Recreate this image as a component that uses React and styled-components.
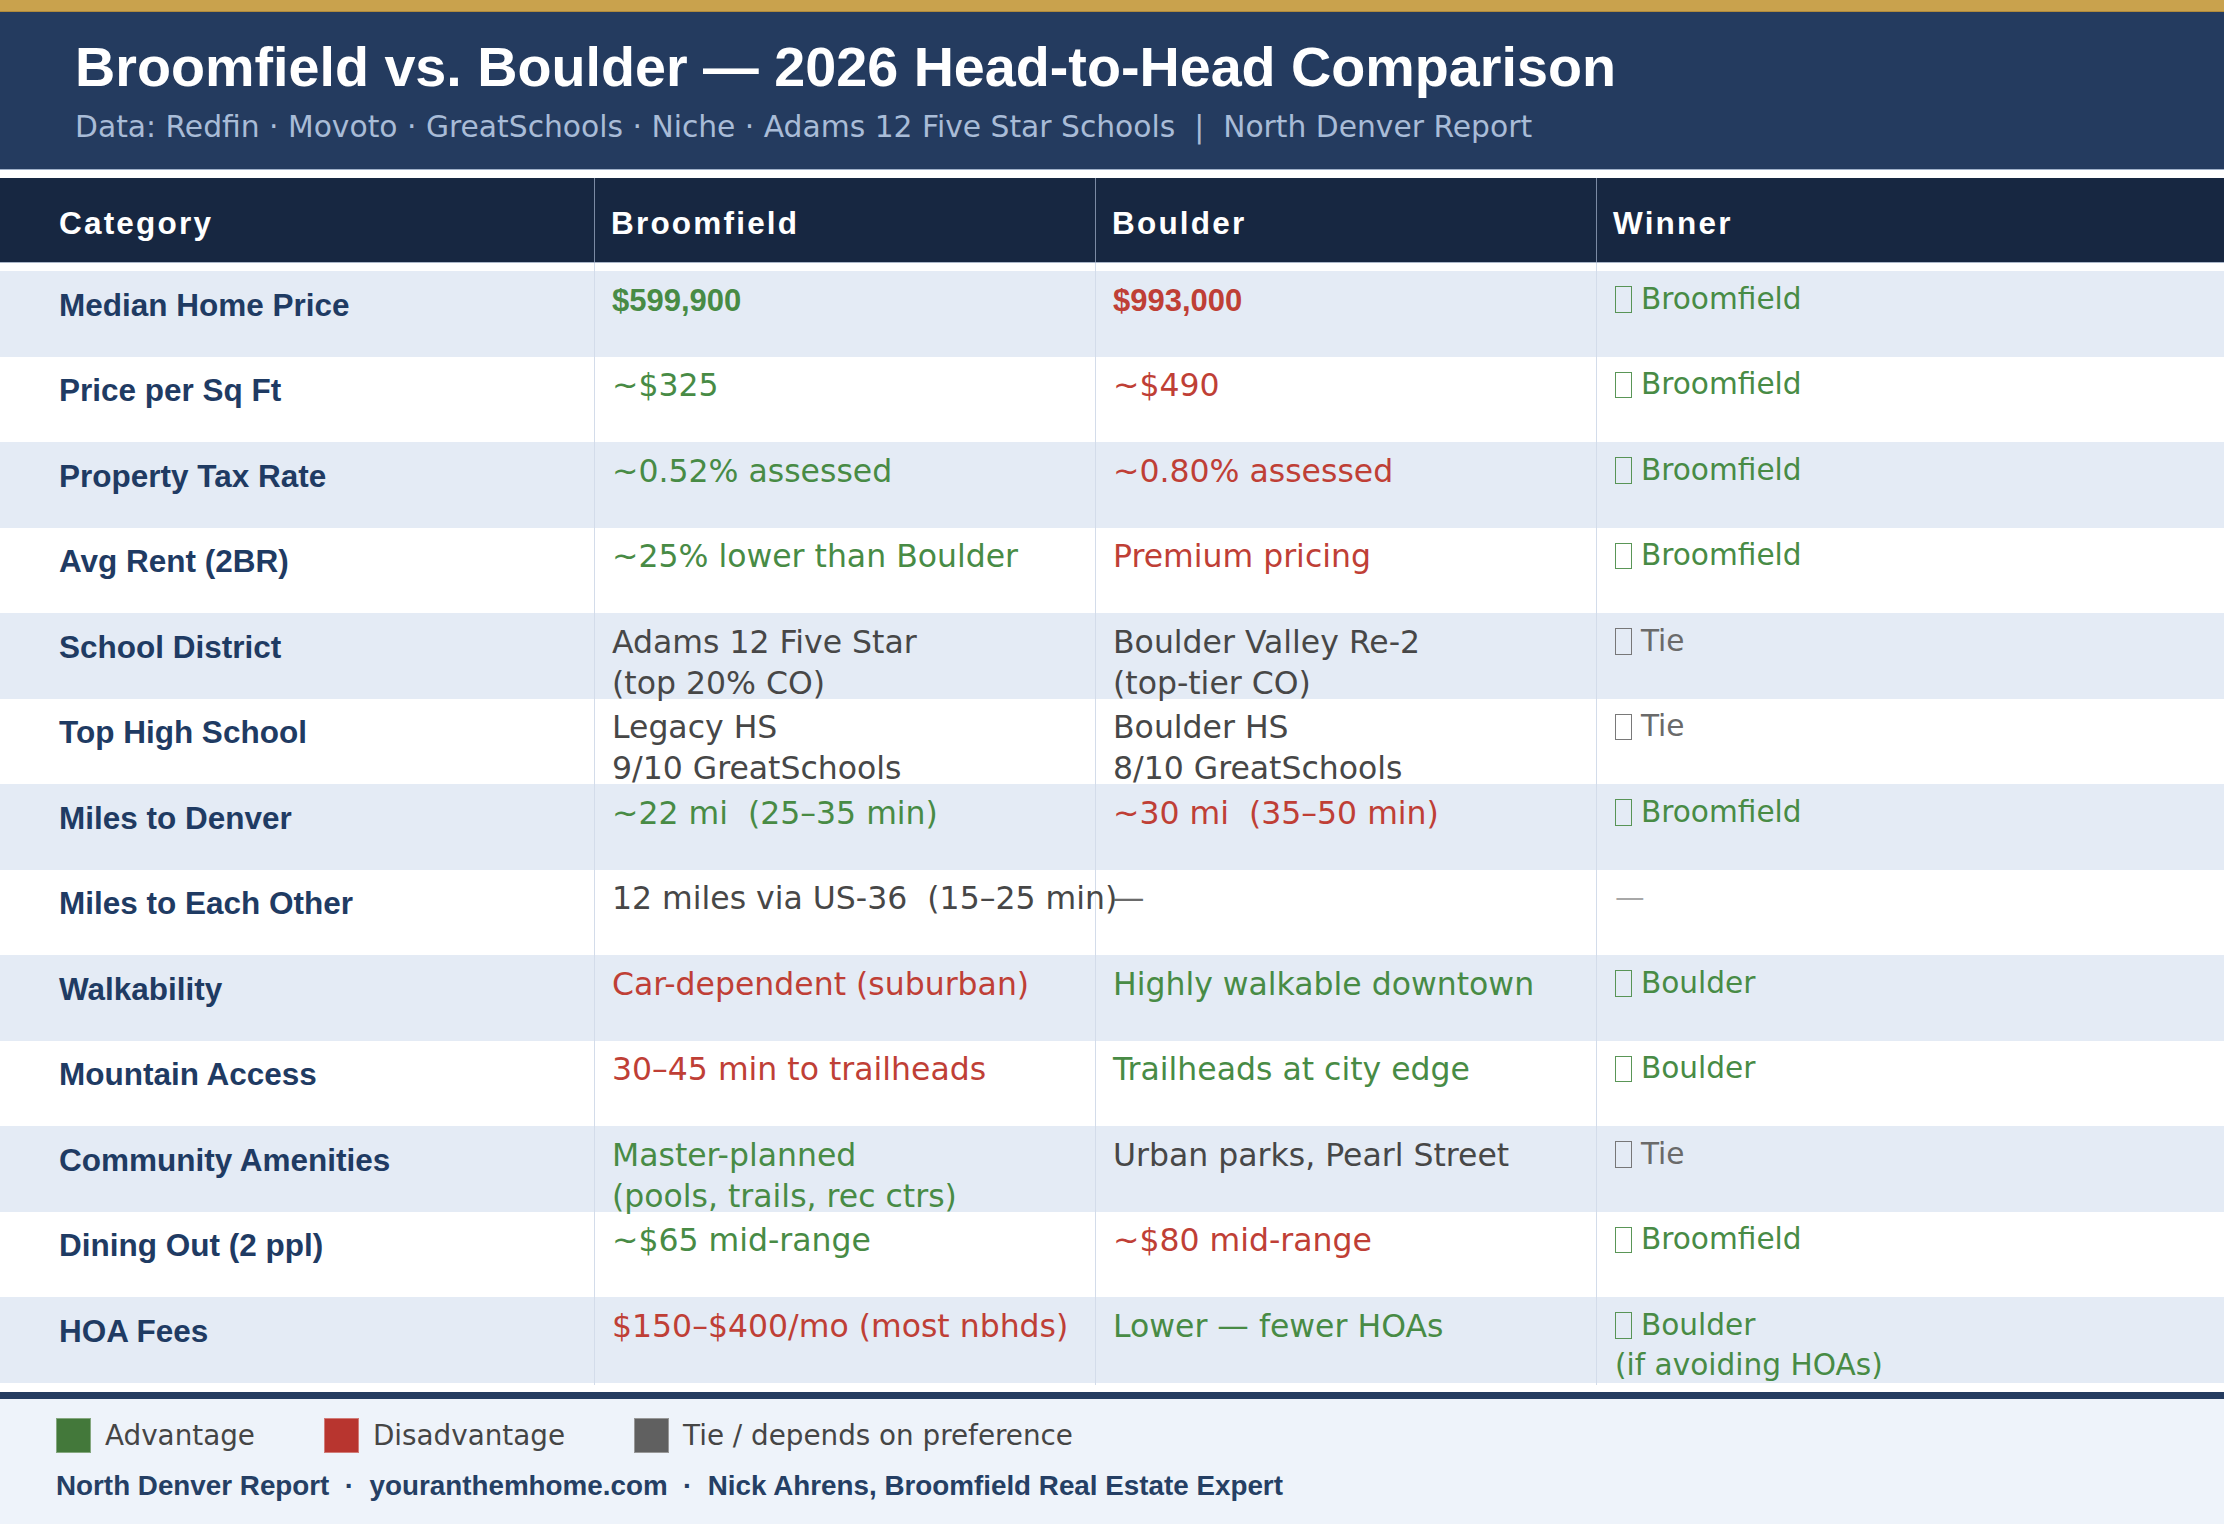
import React from "react";
import styled, { createGlobalStyle } from "styled-components";

const GlobalStyle = createGlobalStyle`
  html, body { margin: 0; padding: 0; background: #ffffff; }
  * { box-sizing: border-box; }
`;

const SANS = `"Liberation Sans", Arial, sans-serif`;
const BODY = `"DejaVu Sans", Verdana, sans-serif`;
const COLS = "594px 501px 501px 1fr";

const TONES = {
  good: "#488b45",
  bad: "#bf3f36",
  neutral: "#474747",
  tie: "#6a6a6a",
  none: "#a8a8a8",
};

const Page = styled.div`
  width: 2224px;
  height: 1524px;
  display: flex;
  flex-direction: column;
  background: #ffffff;
  overflow: hidden;
`;

const TopStripe = styled.div`
  height: 12px;
  background: #c9a24d;
  border-bottom: 1px solid #b08a3c;
`;

const Header = styled.header`
  height: 158px;
  background: #243b5f;
  padding: 24px 0 0 75px;
  border-bottom: 1px solid #9fb0c8;
`;

const Title = styled.h1`
  margin: 0;
  font: 700 55.7px/63px ${SANS};
  color: #ffffff;
`;

const Subtitle = styled.div`
  margin-top: 9.5px;
  font: 400 29.75px/36px ${BODY};
  color: #a9bcd7;
  white-space: pre;
`;

const Spacer = styled.div`
  height: 8px;
  background: #ffffff;
`;

const HeadRow = styled.div`
  display: grid;
  grid-template-columns: ${COLS};
  height: 85px;
  background: #172741;
  border-bottom: 1px solid #aab6c8;
`;

const HeadCell = styled.div`
  display: flex;
  align-items: center;
  padding: 6px 0 0 ${(p) => (p.$first ? "59px" : "16px")};
  border-left: ${(p) => (p.$first ? "none" : "1px solid #7b8aa3")};
  font: 700 31.5px/41px ${SANS};
  letter-spacing: 2.2px;
  color: #ffffff;
`;

const Body = styled.div`
  padding-top: 8px;
  background:
    linear-gradient(to right, transparent 594px, #d3dcea 594px, #d3dcea 595px, transparent 595px),
    linear-gradient(to right, transparent 1095px, #d3dcea 1095px, #d3dcea 1096px, transparent 1096px),
    linear-gradient(to right, transparent 1596px, #d3dcea 1596px, #d3dcea 1597px, transparent 1597px),
    #ffffff;
`;

const Row = styled.div`
  display: grid;
  grid-template-columns: ${COLS};
  height: 85.5px;
  background: ${(p) => (p.$alt ? "#e4ebf5" : "#ffffff")};
`;

const CatCell = styled.div`
  padding: 13.5px 0 0 59px;
  font: 700 31.5px/41px ${SANS};
  color: #1f3b63;
  white-space: nowrap;
`;

const ValueCell = styled.div`
  border-left: 1px solid #d3dcea;
  padding: 8.5px 0 0 17px;
  font-family: ${(p) => (p.$bold ? SANS : BODY)};
  font-weight: ${(p) => (p.$bold ? 700 : 400)};
  font-size: ${(p) => (p.$bold ? "31px" : "31.5px")};
  line-height: 41px;
  color: ${(p) => TONES[p.$tone]};
  white-space: pre;
  overflow: visible;
  position: relative;
  z-index: ${(p) => (p.$over ? 1 : 0)};
`;

const WinnerCell = styled.div`
  border-left: 1px solid #d3dcea;
  padding: 7.5px 0 0 18px;
  font: 400 29.6px/40px ${BODY};
  color: ${(p) => TONES[p.$tone]};
  white-space: pre;
`;

/* missing-glyph box shown before the winner name */
const Tofu = styled.span`
  display: inline-block;
  width: 16.5px;
  height: 26.5px;
  border: 1.6px solid currentColor;
  vertical-align: -4px;
  opacity: 0.9;
`;

const Footer = styled.footer`
  margin-top: 9.5px;
  flex: 1;
  background: #eef3fa;
  border-top: 7px solid #243b5f;
  padding: 19px 0 0 56px;
  display: flex;
  flex-direction: column;
  gap: 16px;
`;

const Legend = styled.div`
  display: flex;
  gap: 69px;
`;

const LegendItem = styled.div`
  display: flex;
  align-items: center;
  gap: 14px;
  font: 400 27.8px/35px ${BODY};
  color: #454545;
`;

const Swatch = styled.span`
  width: 35px;
  height: 35px;
  background: ${(p) => p.$color};
  border: 1px solid rgba(255, 255, 255, 0.35);
`;

const Credits = styled.div`
  font: 700 27.8px/34px ${SANS};
  color: #253f64;
  white-space: pre;
`;

const rows = [
  { cat: "Median Home Price", a: ["$599,900", "good", true], b: ["$993,000", "bad", true], w: ["Broomfield", "good"] },
  { cat: "Price per Sq Ft", a: ["~$325", "good"], b: ["~$490", "bad"], w: ["Broomfield", "good"] },
  { cat: "Property Tax Rate", a: ["~0.52% assessed", "good"], b: ["~0.80% assessed", "bad"], w: ["Broomfield", "good"] },
  { cat: "Avg Rent (2BR)", a: ["~25% lower than Boulder", "good"], b: ["Premium pricing", "bad"], w: ["Broomfield", "good"] },
  {
    cat: "School District",
    a: ["Adams 12 Five Star\n(top 20% CO)", "neutral"],
    b: ["Boulder Valley Re-2\n(top-tier CO)", "neutral"],
    w: ["Tie", "tie"],
  },
  {
    cat: "Top High School",
    a: ["Legacy HS\n9/10 GreatSchools", "neutral"],
    b: ["Boulder HS\n8/10 GreatSchools", "neutral"],
    w: ["Tie", "tie"],
  },
  {
    cat: "Miles to Denver",
    a: ["~22 mi  (25\u201335 min)", "good"],
    b: ["~30 mi  (35\u201350 min)", "bad"],
    w: ["Broomfield", "good"],
  },
  {
    cat: "Miles to Each Other",
    a: ["12 miles via US-36  (15\u201325 min)", "neutral"],
    b: ["\u2014", "tie"],
    w: ["\u2014", "none", true],
    over: true,
  },
  {
    cat: "Walkability",
    a: ["Car-dependent (suburban)", "bad"],
    b: ["Highly walkable downtown", "good"],
    w: ["Boulder", "good"],
  },
  {
    cat: "Mountain Access",
    a: ["30\u201345 min to trailheads", "bad"],
    b: ["Trailheads at city edge", "good"],
    w: ["Boulder", "good"],
  },
  {
    cat: "Community Amenities",
    a: ["Master-planned\n(pools, trails, rec ctrs)", "good"],
    b: ["Urban parks, Pearl Street", "neutral"],
    w: ["Tie", "tie"],
  },
  { cat: "Dining Out (2 ppl)", a: ["~$65 mid-range", "good"], b: ["~$80 mid-range", "bad"], w: ["Broomfield", "good"] },
  {
    cat: "HOA Fees",
    a: ["$150\u2013$400/mo (most nbhds)", "bad"],
    b: ["Lower \u2014 fewer HOAs", "good"],
    w: ["Boulder\n(if avoiding HOAs)", "good"],
  },
];

export default function App() {
  return (
    <Page>
      <GlobalStyle />
      <TopStripe />
      <Header>
        <Title>Broomfield vs. Boulder — 2026 Head-to-Head Comparison</Title>
        <Subtitle>
          {"Data: Redfin · Movoto · GreatSchools · Niche · Adams 12 Five Star Schools  |  North Denver Report"}
        </Subtitle>
      </Header>
      <Spacer />
      <HeadRow>
        <HeadCell $first>Category</HeadCell>
        <HeadCell>Broomfield</HeadCell>
        <HeadCell>Boulder</HeadCell>
        <HeadCell>Winner</HeadCell>
      </HeadRow>
      <Body>
        {rows.map((r, i) => (
          <Row key={r.cat} $alt={i % 2 === 0}>
            <CatCell>{r.cat}</CatCell>
            <ValueCell $tone={r.a[1]} $bold={r.a[2]} $over={r.over}>
              {r.a[0]}
            </ValueCell>
            <ValueCell $tone={r.b[1]} $bold={r.b[2]}>
              {r.b[0]}
            </ValueCell>
            <WinnerCell $tone={r.w[1]}>
              {r.w[2] ? (
                r.w[0]
              ) : (
                <>
                  <Tofu />
                  {" " + r.w[0]}
                </>
              )}
            </WinnerCell>
          </Row>
        ))}
      </Body>
      <Footer>
        <Legend>
          <LegendItem>
            <Swatch $color="#43783a" />
            Advantage
          </LegendItem>
          <LegendItem>
            <Swatch $color="#b8352f" />
            Disadvantage
          </LegendItem>
          <LegendItem>
            <Swatch $color="#606060" />
            Tie / depends on preference
          </LegendItem>
        </Legend>
        <Credits>
          {"North Denver Report  ·  youranthemhome.com  ·  Nick Ahrens, Broomfield Real Estate Expert"}
        </Credits>
      </Footer>
    </Page>
  );
}
